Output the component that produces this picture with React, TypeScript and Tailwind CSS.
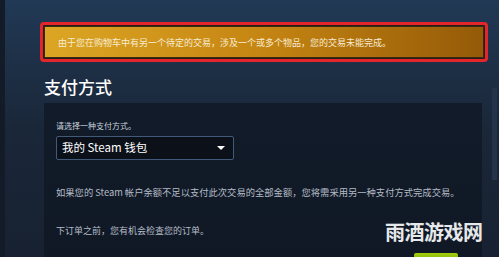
const cjk = { fontFamily: '"Noto Sans CJK SC", "Noto Sans", sans-serif' };

function Banner() {
  return (
    <div className="ml-[35px] w-[448px] rounded-[4px] border-[3px] border-[#e3262b] bg-[#2a1d14] p-px">
      <div className="flex h-[32px] items-center bg-gradient-to-r from-[#dca624] via-[#c58512] to-[#955a08] pl-[14px] shadow-[inset_0_0_0_1px_#3a2a14]">
        <span className="text-[9px] leading-none text-[#f7ecd2]">
          由于您在购物车中有另一个待定的交易，涉及一个或多个物品，您的交易未能完成。
        </span>
      </div>
    </div>
  );
}

function WalletSelect() {
  return (
    <div className="mt-[4px] flex h-[24px] w-[178px] items-center justify-between rounded-[2px] border border-[#41597a] bg-[#0b1019] pl-[5px] pr-[8px]">
      <span className="text-[11.5px] leading-none text-white">我的 Steam 钱包</span>
      <span className="h-0 w-0 border-x-[4px] border-t-[4px] border-x-transparent border-t-white" />
    </div>
  );
}

export default function App() {
  return (
    <div
      className="relative flex h-[257px] w-[499px] overflow-hidden bg-gradient-to-b from-[#213955] via-[#1a2739] to-[#172131]"
      style={cjk}
    >
      <div className="w-[5px] shrink-0 bg-[#121b27]" />

      <div className="flex w-[485px] flex-col pt-[22px]">
        <Banner />

        <h2 className="ml-[39px] mt-[14px] text-[17px] font-medium leading-[22px] text-white">
          支付方式
        </h2>

        <div className="ml-[39px] mt-[5px] flex w-[438px] flex-1 flex-col bg-gradient-to-b from-[#121b29] to-[#101825] pl-[12px] pt-[17px]">
          <p className="text-[8px] leading-[12px] text-[#c6d4df]">请选择一种支付方式。</p>
          <WalletSelect />

          <p className="mt-[26px] text-[9.3px] leading-[12px] text-[#b4bcc6]">
            如果您的 Steam 帐户余额不足以支付此次交易的全部金额，您将需采用另一种支付方式完成交易。
          </p>
          <p className="mt-[27px] text-[9px] leading-[12px] text-[#b4bcc6]">
            下订单之前，您有机会检查您的订单。
          </p>

          <div className="mt-[16px] flex justify-end pr-[24px]">
            <div className="h-[12px] w-[44px] rounded-[2px] bg-gradient-to-b from-[#a4d007] to-[#6c9a17]" />
          </div>
        </div>
      </div>

      <div className="flex w-[9px] shrink-0 justify-center pt-[88px]">
        <div className="h-[92px] w-[5px] bg-[#24334a]" />
      </div>

      <span className="absolute left-[385px] top-[219px] text-[20px] font-bold leading-[26px] tracking-[-0.5px] text-[#e6e8ea]">
        雨酒游戏网
      </span>
    </div>
  );
}
